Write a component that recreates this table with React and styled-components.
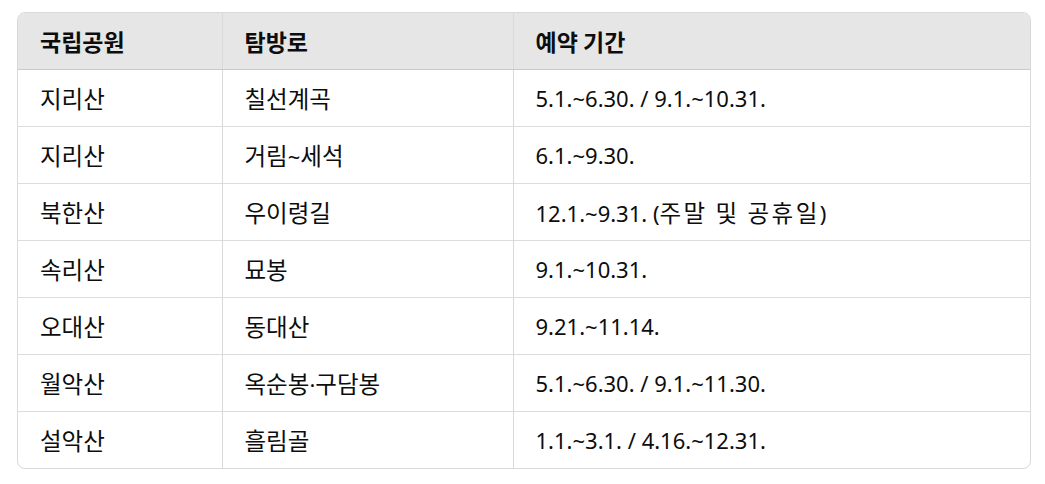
import React from 'react';
import styled, { createGlobalStyle } from 'styled-components';

const GlobalStyle = createGlobalStyle`
  html, body {
    margin: 0;
    background: #fff;
  }
  body {
    font-family: "Noto Sans", "Noto Sans CJK KR", sans-serif;
    color: #0d0d0d;
  }
`;

const Page = styled('div')`
  padding: 12px 14px 16px 17px;
`;

const Frame = styled('div')`
  border: 1px solid #d9d9d9;
  border-radius: 8px;
  overflow: hidden;
`;

const Table = styled('table')`
  width: 100%;
  border-collapse: collapse;
  table-layout: fixed;
  font-size: 22px;

  && th,
  && td {
    text-align: left;
    padding: 0 22px;
    box-sizing: border-box;
    white-space: nowrap;
  }
  && td + td,
  && th + th {
    border-left: 1px solid #d9d9d9;
  }
`;

const HeadRow = styled('tr')`
  background: #e6e6e6;
  th {
    height: 56px;
    font-weight: 700;
    border-bottom: 1px solid #c9c9c9;
  }
`;

const BodyRow = styled('tr')`
  td {
    height: 57px;
  }
  & + & td {
    border-top: 1px solid #dcdcdc;
  }
`;

// hangul runs are set a bit larger so they sit like the reference's Korean face
const Hangul = styled('span')`
  font-family: "Noto Sans CJK KR", sans-serif;
  font-size: ${p => (p.$bold ? '23px' : '23.5px')};
  letter-spacing: ${p => (p.$spread ? '2.5px' : '0')};
`;

const withHangul = (text, opts = {}) =>
  text.split(/([\uAC00-\uD7A3][\uAC00-\uD7A3 ]*[\uAC00-\uD7A3]|[\uAC00-\uD7A3])/).map((part, i) =>
    i % 2 === 1
      ? <Hangul key={i} $bold={opts.bold} $spread={opts.spread}>{part}</Hangul>
      : part
  );

const rows = [
  ['지리산', '칠선계곡', '5.1.~6.30. / 9.1.~10.31.'],
  ['지리산', '거림~세석', '6.1.~9.30.'],
  ['북한산', '우이령길', '12.1.~9.31. (주말 및 공휴일)'],
  ['속리산', '묘봉', '9.1.~10.31.'],
  ['오대산', '동대산', '9.21.~11.14.'],
  ['월악산', '옥순봉·구담봉', '5.1.~6.30. / 9.1.~11.30.'],
  ['설악산', '흘림골', '1.1.~3.1. / 4.16.~12.31.']
];

export default function App () {
  return (
    <Page>
      <GlobalStyle />
      <Frame>
        <Table>
          <colgroup>
            <col style={{ width: 204 }} />
            <col style={{ width: 291 }} />
            <col />
          </colgroup>
          <thead>
            <HeadRow>
              <th>{withHangul('국립공원', { bold: true })}</th>
              <th>{withHangul('탐방로', { bold: true })}</th>
              <th>{withHangul('예약 기간', { bold: true })}</th>
            </HeadRow>
          </thead>
          <tbody>
            {rows.map((r, i) => (
              <BodyRow key={i}>
                {r.map((c, j) => (
                  <td key={j}>{withHangul(c, { spread: j === 2 })}</td>
                ))}
              </BodyRow>
            ))}
          </tbody>
        </Table>
      </Frame>
    </Page>
  );
}
